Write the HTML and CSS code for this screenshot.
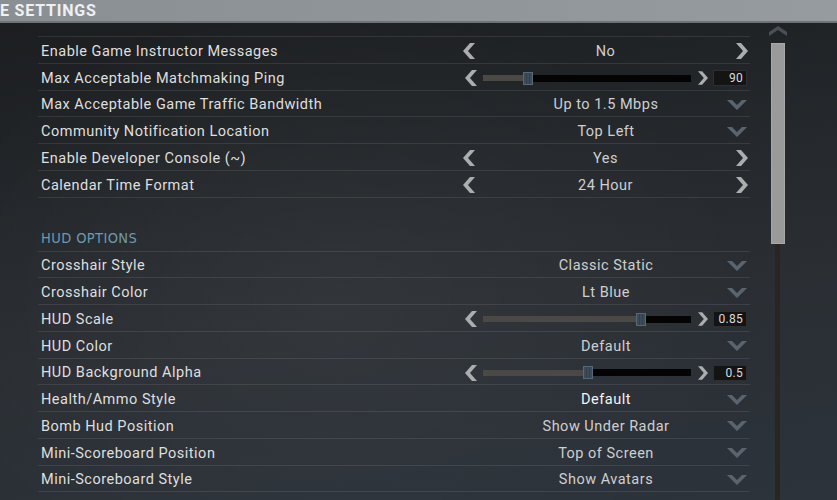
FILE: index.html
```html
<!DOCTYPE html>
<html lang="en">
<head>
    <meta charset="UTF-8">
    <title>Game Settings</title>
    <link rel="stylesheet" href="styles.css">
</head>
<body>

<div class="panel">
    <div class="titlebar"><span class="title">E SETTINGS</span></div>

    <div class="body">
        <div class="list">

            <div class="group">
                <div class="row">
                    <span class="label">Enable Game Instructor Messages</span>
                    <div class="control toggle">
                        <svg class="chev" viewBox="0 0 12 16"><polygon points="7,0 12,0 5,8 12,16 7,16 0,8"/></svg>
                        <span class="value">No</span>
                        <svg class="chev" viewBox="0 0 12 16"><polygon points="0,0 5,0 12,8 5,16 0,16 7,8"/></svg>
                    </div>
                </div>
                <div class="row">
                    <span class="label">Max Acceptable Matchmaking Ping</span>
                    <div class="control slider">
                        <svg class="chev" viewBox="0 0 12 16"><polygon points="7,0 12,0 5,8 12,16 7,16 0,8"/></svg>
                        <div class="track"><div class="fill" style="width: 19.2%"></div><div class="thumb"></div><div class="rest"></div></div>
                        <svg class="chev small" viewBox="0 0 12 16"><polygon points="0,0 5,0 12,8 5,16 0,16 7,8"/></svg>
                        <span class="num">90</span>
                    </div>
                </div>
                <div class="row">
                    <span class="label">Max Acceptable Game Traffic Bandwidth</span>
                    <div class="control dropdown">
                        <span class="value">Up to 1.5 Mbps</span>
                        <svg class="down" viewBox="0 0 20 10"><polygon points="0,0 5,0 10,5 15,0 20,0 10,10"/></svg>
                    </div>
                </div>
                <div class="row">
                    <span class="label">Community Notification Location</span>
                    <div class="control dropdown">
                        <span class="value">Top Left</span>
                        <svg class="down" viewBox="0 0 20 10"><polygon points="0,0 5,0 10,5 15,0 20,0 10,10"/></svg>
                    </div>
                </div>
                <div class="row">
                    <span class="label">Enable Developer Console (~)</span>
                    <div class="control toggle">
                        <svg class="chev" viewBox="0 0 12 16"><polygon points="7,0 12,0 5,8 12,16 7,16 0,8"/></svg>
                        <span class="value">Yes</span>
                        <svg class="chev" viewBox="0 0 12 16"><polygon points="0,0 5,0 12,8 5,16 0,16 7,8"/></svg>
                    </div>
                </div>
                <div class="row">
                    <span class="label">Calendar Time Format</span>
                    <div class="control toggle">
                        <svg class="chev" viewBox="0 0 12 16"><polygon points="7,0 12,0 5,8 12,16 7,16 0,8"/></svg>
                        <span class="value">24 Hour</span>
                        <svg class="chev" viewBox="0 0 12 16"><polygon points="0,0 5,0 12,8 5,16 0,16 7,8"/></svg>
                    </div>
                </div>
            </div>

            <div class="section-head">HUD OPTIONS</div>

            <div class="group">
                <div class="row">
                    <span class="label">Crosshair Style</span>
                    <div class="control dropdown">
                        <span class="value">Classic Static</span>
                        <svg class="down" viewBox="0 0 20 10"><polygon points="0,0 5,0 10,5 15,0 20,0 10,10"/></svg>
                    </div>
                </div>
                <div class="row">
                    <span class="label">Crosshair Color</span>
                    <div class="control dropdown">
                        <span class="value">Lt Blue</span>
                        <svg class="down" viewBox="0 0 20 10"><polygon points="0,0 5,0 10,5 15,0 20,0 10,10"/></svg>
                    </div>
                </div>
                <div class="row">
                    <span class="label">HUD Scale</span>
                    <div class="control slider">
                        <svg class="chev" viewBox="0 0 12 16"><polygon points="7,0 12,0 5,8 12,16 7,16 0,8"/></svg>
                        <div class="track"><div class="fill" style="width: 73.6%"></div><div class="thumb"></div><div class="rest"></div></div>
                        <svg class="chev small" viewBox="0 0 12 16"><polygon points="0,0 5,0 12,8 5,16 0,16 7,8"/></svg>
                        <span class="num">0.85</span>
                    </div>
                </div>
                <div class="row">
                    <span class="label">HUD Color</span>
                    <div class="control dropdown">
                        <span class="value">Default</span>
                        <svg class="down" viewBox="0 0 20 10"><polygon points="0,0 5,0 10,5 15,0 20,0 10,10"/></svg>
                    </div>
                </div>
                <div class="row">
                    <span class="label">HUD Background Alpha</span>
                    <div class="control slider">
                        <svg class="chev" viewBox="0 0 12 16"><polygon points="7,0 12,0 5,8 12,16 7,16 0,8"/></svg>
                        <div class="track"><div class="fill" style="width: 48%"></div><div class="thumb"></div><div class="rest"></div></div>
                        <svg class="chev small" viewBox="0 0 12 16"><polygon points="0,0 5,0 12,8 5,16 0,16 7,8"/></svg>
                        <span class="num">0.5</span>
                    </div>
                </div>
                <div class="row">
                    <span class="label">Health/Ammo Style</span>
                    <div class="control dropdown">
                        <span class="value bright">Default</span>
                        <svg class="down" viewBox="0 0 20 10"><polygon points="0,0 5,0 10,5 15,0 20,0 10,10"/></svg>
                    </div>
                </div>
                <div class="row">
                    <span class="label">Bomb Hud Position</span>
                    <div class="control dropdown">
                        <span class="value">Show Under Radar</span>
                        <svg class="down" viewBox="0 0 20 10"><polygon points="0,0 5,0 10,5 15,0 20,0 10,10"/></svg>
                    </div>
                </div>
                <div class="row">
                    <span class="label">Mini-Scoreboard Position</span>
                    <div class="control dropdown">
                        <span class="value">Top of Screen</span>
                        <svg class="down" viewBox="0 0 20 10"><polygon points="0,0 5,0 10,5 15,0 20,0 10,10"/></svg>
                    </div>
                </div>
                <div class="row">
                    <span class="label">Mini-Scoreboard Style</span>
                    <div class="control dropdown">
                        <span class="value">Show Avatars</span>
                        <svg class="down" viewBox="0 0 20 10"><polygon points="0,0 5,0 10,5 15,0 20,0 10,10"/></svg>
                    </div>
                </div>
            </div>

        </div>

        <div class="scroll">
            <svg class="scroll-up" viewBox="0 0 18 10"><polygon points="0,6 9,0 18,6 18,10 9,4 0,10"/></svg>
            <div class="scroll-track"><div class="scroll-thumb"></div></div>
        </div>
    </div>
</div>

</body>
</html>
```

FILE: styles.css
```css
body {
    margin: 0;
    padding: 0;
    font-family: Roboto, 'DejaVu Sans', sans-serif;
    background-color: #24282c;
    color: #dedede;
}
.panel {
    width: 837px;
    height: 500px;
    overflow: hidden;
    background:
        radial-gradient(ellipse 420px 300px at 330px 300px, rgba(255, 255, 255, 0.045), transparent),
        linear-gradient(172deg, #1b1d1f 0%, #212427 25%, #2a2e33 60%, #2c333b 100%);
}
.titlebar {
    height: 21px;
    background: linear-gradient(90deg, #8a8f94, #969ba0);
    border-bottom: 2px solid #6e7377;
    display: flex;
    align-items: center;
}
.title {
    font-weight: bold;
    font-size: 16px;
    letter-spacing: 0.8px;
    color: #eef0f1;
}
.body {
    display: flex;
    padding: 13px 0 0 38px;
}
.list {
    width: 712px;
}
.group {
    border-bottom: 1px solid rgba(255, 255, 255, 0.09);
}
.row {
    box-sizing: border-box;
    height: 26.75px;
    display: flex;
    align-items: center;
    padding-top: 3px;
    border-top: 1px solid rgba(255, 255, 255, 0.09);
}
.label {
    flex: 1;
    padding-left: 3px;
    font-size: 14.5px;
    letter-spacing: 0.5px;
    color: #dfdfdf;
}
.control {
    width: 285px;
    flex: none;
    display: flex;
    align-items: center;
    font-size: 14.5px;
    letter-spacing: 0.5px;
    color: #cfcfcf;
}
.value {
    flex: 1;
    text-align: center;
}
.value.bright {
    color: #f4f4f4;
}
.chev {
    width: 12px;
    height: 16px;
    fill: #abadaf;
    flex: none;
}
.toggle {
    padding-right: 2px;
}
.slider .chev {
    margin-right: 6px;
}
.slider .chev.small {
    width: 10px;
    margin: 0 5px 0 7px;
}
.track {
    width: 208px;
    height: 6px;
    display: flex;
    align-items: center;
}
.fill {
    height: 6px;
    background-color: #4a4946;
}
.thumb {
    width: 10px;
    height: 13px;
    flex: none;
    box-sizing: border-box;
    border: 1px solid #596877;
    background: repeating-linear-gradient(90deg, #3d4a57 0 2px, #33404c 2px 3px);
}
.rest {
    flex: 1;
    height: 7px;
    background-color: #040404;
}
.num {
    width: 34px;
    height: 16px;
    box-sizing: border-box;
    background-color: #141414;
    border: 1px solid #2e2e2e;
    font-size: 12px;
    letter-spacing: 0.3px;
    line-height: 14px;
    text-align: right;
    padding-right: 3px;
    color: #dcdcdc;
}
.dropdown {
    padding-left: 20px;
    padding-right: 3px;
    box-sizing: border-box;
}
.down {
    width: 20px;
    height: 10px;
    fill: #5a646e;
    flex: none;
}
.section-head {
    box-sizing: border-box;
    height: 53px;
    display: flex;
    align-items: flex-end;
    padding: 0 0 5px 3px;
    font-family: 'DejaVu Sans Condensed', 'DejaVu Sans', sans-serif;
    font-size: 14.5px;
    letter-spacing: 0.4px;
    color: #6f99ad;
}
.scroll {
    margin-left: 19px;
    margin-top: -10px;
    width: 18px;
    display: flex;
    flex-direction: column;
    align-items: center;
}
.scroll-up {
    width: 18px;
    height: 10px;
    fill: #4a5057;
}
.scroll-track {
    margin-top: 7px;
    width: 14px;
    height: 470px;
    display: flex;
    justify-content: center;
    background: linear-gradient(90deg, transparent 4px, #2a2523 4px, #2a2523 9px, transparent 9px);
}
.scroll-thumb {
    width: 14px;
    height: 201px;
    box-sizing: border-box;
    background-color: #9a9a9a;
    border: 1px solid #a8a8a8;
}
```
